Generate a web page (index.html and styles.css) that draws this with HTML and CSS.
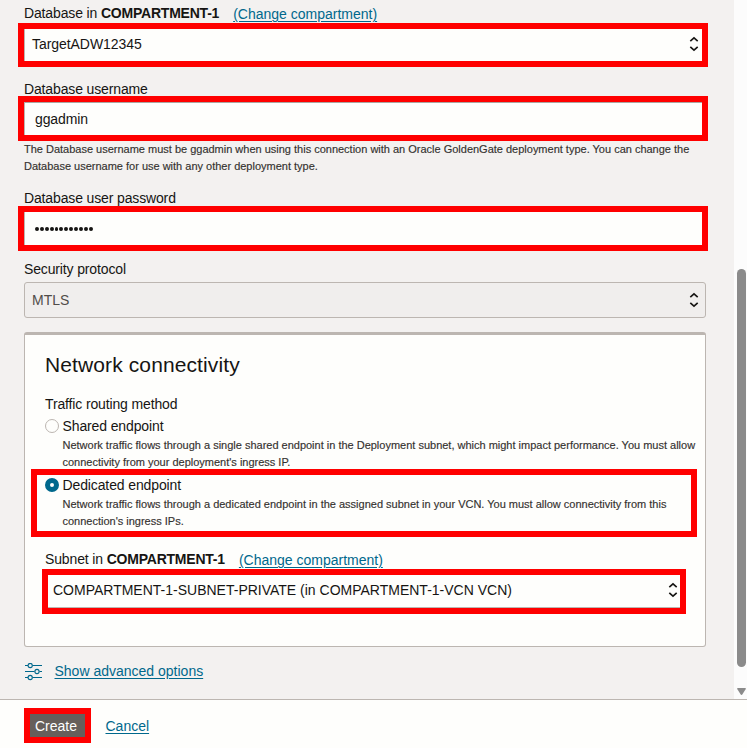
FILE: index.html
```html
<!DOCTYPE html>
<html lang="en">
<head>
<meta charset="utf-8">
<title>Create connection</title>
<link rel="stylesheet" href="styles.css">
</head>
<body>
<div class="panel">
  <div class="body">
    <main class="form">
      <div class="label first"><span>Database in <b>COMPARTMENT-1</b></span><a class="change" href="#">(Change compartment)</a></div>
      <div class="mark field-db"><div class="control"><span class="value">TargetADW12345</span>
        <svg class="chev" width="10" height="16" viewBox="0 0 10 16"><path d="M1.3 5.2 5 1.8l3.7 3.4M1.3 10.8 5 14.2l3.7-3.4"/></svg></div></div>
      <div class="label user">Database username</div>
      <div class="mark field-user"><div class="control input top-line">ggadmin</div></div>
      <p class="help user-help">The Database username must be ggadmin when using this connection with an Oracle GoldenGate deployment type. You can change the<br>Database username for use with any other deployment type.</p>
      <div class="label pass">Database user password</div>
      <div class="mark field-pass"><div class="control input"><span class="dots"><i></i><i></i><i></i><i></i><i></i><i></i><i></i><i></i><i></i><i></i><i></i><i></i></span></div></div>
      <div class="label sec">Security protocol</div>
      <div class="select"><span>MTLS</span>
        <svg class="chev" width="10" height="16" viewBox="0 0 10 16"><path d="M1.3 5.2 5 1.8l3.7 3.4M1.3 10.8 5 14.2l3.7-3.4"/></svg></div>
      <section class="card">
        <h2>Network connectivity</h2>
        <div class="label method">Traffic routing method</div>
        <div class="option">
          <span class="radio"></span>
          <div><div class="name">Shared endpoint</div>
          <p class="help">Network traffic flows through a single shared endpoint in the Deployment subnet, which might impact performance. You must allow<br>connectivity from your deployment's ingress IP.</p></div>
        </div>
        <div class="mark dedicated">
          <div class="option">
            <span class="radio on"></span>
            <div><div class="name">Dedicated endpoint</div>
            <p class="help">Network traffic flows through a dedicated endpoint in the assigned subnet in your VCN. You must allow connectivity from this<br>connection's ingress IPs.</p></div>
          </div>
        </div>
        <div class="label subnet"><span>Subnet in <b>COMPARTMENT-1</b></span><a class="change" href="#">(Change compartment)</a></div>
        <div class="mark field-subnet"><div class="control bottom-line"><span>COMPARTMENT-1-SUBNET-PRIVATE (in COMPARTMENT-1-VCN VCN)</span>
          <svg class="chev" width="10" height="16" viewBox="0 0 10 16"><path d="M1.3 5.2 5 1.8l3.7 3.4M1.3 10.8 5 14.2l3.7-3.4"/></svg></div></div>
      </section>
      <div class="advanced">
        <svg width="18" height="18" viewBox="0 0 18 18"><path d="M0 2.5h3M7.5 2.5H17M0 8.5h9.5M14.5 8.5H17M0 14.5h3M7.5 14.5H17"/><circle cx="5.2" cy="2.5" r="2.1"/><circle cx="12" cy="8.5" r="2.1"/><circle cx="5.2" cy="14.5" r="2.1"/></svg>
        <a href="#">Show advanced options</a>
      </div>
    </main>
    <div class="track">
      <div class="thumb"></div>
      <svg class="down" width="9" height="8" viewBox="0 0 9 8"><path d="M.8 0h7.4q1 0 .6.9L5.6 6.1q-1.1 1.7-2.2 0L.2.9Q-.2 0 .8 0z"/></svg>
    </div>
  </div>
  <footer>
    <div class="mark create"><button>Create</button></div>
    <a href="#">Cancel</a>
  </footer>
</div>
</body>
</html>
```
FILE: styles.css
```css
* { box-sizing: border-box; }
body {
  margin: 0;
  width: 747px;
  height: 748px;
  overflow: hidden;
  background: #fefefc;
  font: 14px/20px "Liberation Sans", Arial, sans-serif;
  color: #161513;
}
p, h2 { margin: 0; }
a { color: #00688c; text-decoration: underline; text-underline-offset: 2px; }
.body { display: flex; height: 699px; background: #f3f1f0; }
.form {
  display: flex;
  flex-direction: column;
  width: 734px;
  padding: 3px 28px 0 24px;
}
.label { display: flex; height: 20px; white-space: pre; letter-spacing: -.14px; }
.label b { letter-spacing: -.22px; }
.change { margin: 1px 0 0 14px; letter-spacing: 0; }
.mark { border: 6px solid #f00; margin-left: -6px; margin-right: -2px; width: 690px; }
.control {
  display: flex;
  align-items: center;
  justify-content: space-between;
  height: 100%;
  padding: 0 3px 2px 7px;
  background: #fefefc;
  border-left: 1px solid #bcb6b1;
}
.value { letter-spacing: -.06px; }
.input { padding-left: 10px; letter-spacing: -.1px; }
.top-line { border-top: 1px solid #aaa6a2; padding-bottom: 0; }
.bottom-line { border-left: 0; border-bottom: 1px solid #bcb6b1; }
.chev { flex: none; fill: none; stroke: #161513; stroke-width: 1.6; }
.field-db { height: 44px; }
.user { margin-top: 12px; height: 17px; }
.field-user { height: 45px; }
.help { font-size: 11px; line-height: 17px; color: #34312f; white-space: nowrap; letter-spacing: -.005px; -webkit-text-stroke: .15px #34312f; }
.user-help { height: 34px; }
.pass { margin-top: 13px; height: 18px; }
.field-pass { height: 45px; }
.field-pass .control { padding-bottom: 0; }
.dots { display: flex; gap: 1px; }
.dots i { width: 3.9px; height: 4px; border-radius: 50%; background: #161513; }
.sec { margin-top: 8px; height: 23px; }
.select {
  display: flex;
  align-items: center;
  justify-content: space-between;
  flex: none;
  width: 682px;
  height: 36px;
  padding: 0 6px 0 7px;
  border: 1px solid #bcb6b1;
  border-radius: 3px;
  background: #f0eeed;
  color: #504c49;
}
.card {
  flex: none;
  width: 682px;
  height: 315px;
  margin-top: 14px;
  padding: 17px 20px 0;
  border: 1px solid #bcb6b1;
  border-top-width: 3px;
  border-radius: 3px;
  background: #fefefc;
}
h2 { font-size: 21px; line-height: 26px; font-weight: 400; letter-spacing: .11px; }
.method { margin-top: 16px; }
.option { display: flex; gap: 4px; margin-top: 2px; }
.option .help { margin-top: 1px; margin-bottom: -1px; }
.name { height: 20px; letter-spacing: -.12px; }
.option > div { margin-left: -.5px; }
.radio { flex: none; width: 14px; height: 14px; margin-top: 3px; border: 1px solid #bcb6b1; border-radius: 50%; }
.radio.on { border: 5px solid #00688c; }
.dedicated { width: 666px; height: 68px; margin-left: -14px; margin-top: -1px; }
.dedicated .option { margin: 0 0 0 8px; }
.subnet { margin-top: 12px; }
.field-subnet { width: 644px; height: 45px; margin-left: -3px; }
.field-subnet .control { padding-left: 5px; padding-right: 2px; }
.advanced { display: flex; align-items: center; gap: 11px; height: 20px; margin-top: 14px; }
.advanced svg { fill: none; stroke: #00688c; stroke-width: 1.1; margin: 2px 0 0 1px; }
.advanced a { margin-left: .5px; }
.track { display: flex; flex-direction: column; align-items: center; width: 13px; padding-left: 2px; background: #fcfcfc; }
.thumb { width: 9px; height: 398px; margin-top: 269px; border-radius: 5px; background: #8b8b8b; }
.down { margin-top: 21px; fill: #8b8b8b; }
footer { display: flex; align-items: center; height: 49px; padding: 3px 24px 0; border-top: 1px solid #bcb6b1; }
.create { width: 67px; height: 35px; margin: 0 14px 0 0; }
button { display: block; width: 100%; height: 100%; padding: 1px 3px 0 0; border: 0; background: #665f5b; color: #fff; font: inherit; }
footer a { margin: 1px 0 0 .5px; }
```
